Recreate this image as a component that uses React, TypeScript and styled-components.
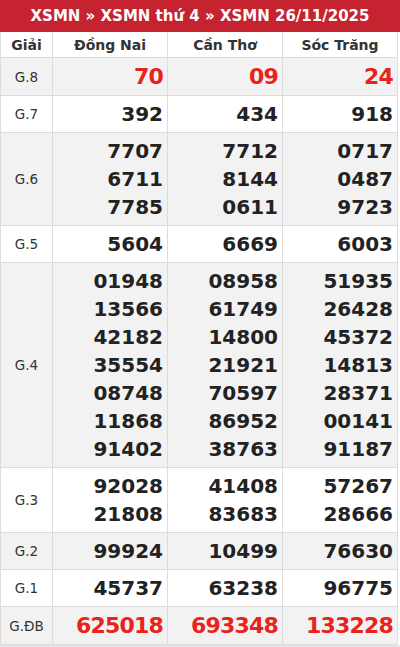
import React from 'react';
import styled, { createGlobalStyle } from 'styled-components';

interface PrizeRow {
  label: string;
  values: string[][]; // per province, list of numbers
  highlight?: boolean;
}

const provinces = ['Đồng Nai', 'Cần Thơ', 'Sóc Trăng'];

const rows: PrizeRow[] = [
  { label: 'G.8', values: [['70'], ['09'], ['24']], highlight: true },
  { label: 'G.7', values: [['392'], ['434'], ['918']] },
  {
    label: 'G.6',
    values: [
      ['7707', '6711', '7785'],
      ['7712', '8144', '0611'],
      ['0717', '0487', '9723'],
    ],
  },
  { label: 'G.5', values: [['5604'], ['6669'], ['6003']] },
  {
    label: 'G.4',
    values: [
      ['01948', '13566', '42182', '35554', '08748', '11868', '91402'],
      ['08958', '61749', '14800', '21921', '70597', '86952', '38763'],
      ['51935', '26428', '45372', '14813', '28371', '00141', '91187'],
    ],
  },
  {
    label: 'G.3',
    values: [
      ['92028', '21808'],
      ['41408', '83683'],
      ['57267', '28666'],
    ],
  },
  { label: 'G.2', values: [['99924'], ['10499'], ['76630']] },
  { label: 'G.1', values: [['45737'], ['63238'], ['96775']] },
  { label: 'G.ĐB', values: [['625018'], ['693348'], ['133228']], highlight: true },
];

export default function App() {
  return (
    <>
      <GlobalStyle />
      <Wrapper>
        <Title>XSMN » XSMN thứ 4 » XSMN 26/11/2025</Title>
        <Table>
          <colgroup>
            <col style={{ width: 52 }} />
            <col />
            <col />
            <col />
          </colgroup>
          <thead>
            <tr>
              <HeadCell>Giải</HeadCell>
              {provinces.map((p) => (
                <HeadCell key={p}>{p}</HeadCell>
              ))}
            </tr>
          </thead>
          <tbody>
            {rows.map((row, i) => (
              <Row key={row.label} $alt={i % 2 === 0}>
                <LabelCell>{row.label}</LabelCell>
                {row.values.map((nums, j) => (
                  <NumCell key={j}>
                    {nums.map((n, k) => (
                      <Num key={k} $red={row.highlight}>
                        {n}
                      </Num>
                    ))}
                  </NumCell>
                ))}
              </Row>
            ))}
          </tbody>
        </Table>
      </Wrapper>
    </>
  );
}

const GlobalStyle = createGlobalStyle`
  body {
    margin: 0;
    background: #e4e5ea;
    font-family: "DejaVu Sans", Verdana, sans-serif;
  }
`;

const Wrapper = styled.div`
  width: 400px;
  background: #fff;
`;

const Title = styled.div`
  height: 32px;
  line-height: 32px;
  background: #c5232f;
  color: #fff;
  font-weight: bold;
  font-size: 15px;
  text-align: center;
`;

const Table = styled.table`
  width: 398px;
  border-collapse: collapse;
  table-layout: fixed;
  border-left: 1px solid #d9d9de;
`;

const HeadCell = styled.th`
  height: 25px;
  padding: 0;
  font-size: 14px;
  font-weight: bold;
  color: #333;
  text-align: center;
  border: 1px solid #dcdcdc;
  border-top: none;
`;

const Row = styled.tr<{ $alt: boolean }>`
  background: ${(p) => (p.$alt ? '#f2f2f3' : '#fff')};
`;

const LabelCell = styled.td`
  padding: 0;
  text-align: center;
  font-size: 13.5px;
  color: #333;
  border: 1px solid #dcdcdc;
`;

const NumCell = styled.td`
  padding: 4px 4px 4px 0;
  text-align: right;
  vertical-align: middle;
  border: 1px solid #dcdcdc;
`;

const Num = styled.div<{ $red?: boolean }>`
  font-weight: bold;
  font-size: ${(p) => (p.$red ? '22px' : '20px')};
  line-height: ${(p) => (p.$red ? '29px' : '28px')};
  letter-spacing: ${(p) => (p.$red ? '-0.8px' : '0')};
  color: ${(p) => (p.$red ? '#e8231b' : '#222')};
`;
